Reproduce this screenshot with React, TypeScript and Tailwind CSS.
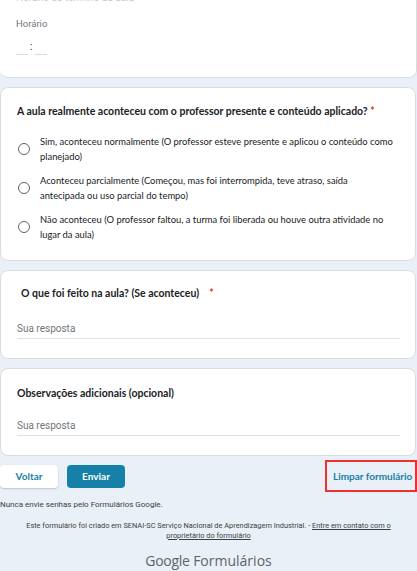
import React from "react";

const lato = { fontFamily: "Lato, 'Noto Sans', sans-serif" };
const roboto = { fontFamily: "Roboto, 'Liberation Sans', sans-serif" };

function Radio({ children }: { children: React.ReactNode }) {
  return (
    <div className="flex items-center gap-[10px]">
      <div className="ml-[17px] h-[12px] w-[12px] shrink-0 rounded-full border-[1.5px] border-[#5f6368]" />
      <div className="text-[9.4px] leading-[15px] text-[#202124]" style={lato}>
        {children}
      </div>
    </div>
  );
}

function TextAnswer() {
  return (
    <div className="mr-[15px] border-b border-[#e0e0e0] pb-[2px] text-[10px] leading-[14px] text-[#70757a]" style={roboto}>
      Sua resposta
    </div>
  );
}

export default function App() {
  return (
    <div className="h-[571px] w-[417px] overflow-hidden bg-[#e9f0f8]">
      <div className="flex flex-col gap-[9px]">
        {/* Card 1 */}
        <div className="-mt-[8px] rounded-b-[8px] border-b border-r border-[#dadce0] bg-white px-[16px] pb-[22px]">
          <div className="text-[10px] leading-[12px] text-[#c6c9cc]" style={roboto}>
            Horário de término da aula
          </div>
          <div className="mt-[14px] text-[9.5px] leading-[12px] text-[#70757a]" style={roboto}>
            Horário
          </div>
          <div className="mt-[12px] flex items-end gap-[2px]">
            <div className="h-[1px] w-[12px] bg-[#dadce0]" />
            <div className="mb-[3px] text-[10px] leading-[10px] text-[#202124]" style={roboto}>
              :
            </div>
            <div className="ml-[1px] h-[1px] w-[12px] bg-[#dadce0]" />
          </div>
        </div>

        {/* Card 2 */}
        <div className="mr-[1px] rounded-[8px] border border-[#dadce0] bg-white pb-[18px] pt-[16px]">
          <div className="pl-[16px] text-[10.5px] font-bold leading-[14px] text-[#202124]" style={lato}>
            A aula realmente aconteceu com o professor presente e conteúdo aplicado?{" "}
            <span className="text-[#d93025]">*</span>
          </div>
          <div className="mt-[16px] flex flex-col gap-[9px] pr-[20px]">
            <Radio>
              Sim, aconteceu normalmente (O professor esteve presente e aplicou o conteúdo como planejado)
            </Radio>
            <Radio>
              Aconteceu parcialmente (Começou, mas foi interrompida, teve atraso, saída
              <br />
              antecipada ou uso parcial do tempo)
            </Radio>
            <Radio>
              Não aconteceu (O professor faltou, a turma foi liberada ou houve outra atividade no lugar da aula)
            </Radio>
          </div>
        </div>

        {/* Card 3 */}
        <div className="mr-[1px] rounded-[8px] border border-[#dadce0] bg-white pb-[19px] pl-[16px] pt-[15px]">
          <div className="pl-[4px] text-[10.5px] font-bold leading-[14px] text-[#202124]" style={lato}>
            O que foi feito na aula? (Se aconteceu)
            <span className="ml-[10px] text-[#d93025]">*</span>
          </div>
          <div className="mt-[22px]">
            <TextAnswer />
          </div>
        </div>

        {/* Card 4 */}
        <div className="mr-[1px] rounded-[8px] border border-[#dadce0] bg-white pb-[19px] pl-[16px] pt-[17px]">
          <div className="text-[10.5px] font-bold leading-[14px] text-[#202124]" style={lato}>
            Observações adicionais (opcional)
          </div>
          <div className="mt-[19px]">
            <TextAnswer />
          </div>
        </div>
      </div>

      {/* Buttons */}
      <div className="mt-[4px] flex items-center justify-between">
        <div className="flex items-center gap-[9px]">
          <div
            className="flex h-[23px] w-[58px] items-center justify-center rounded-[4px] bg-white text-[10px] font-bold text-[#1b7fa6] shadow-[0_1px_2px_rgba(0,0,0,0.2)]"
            style={lato}
          >
            Voltar
          </div>
          <div
            className="flex h-[23px] w-[58px] items-center justify-center rounded-[4px] bg-[#1580a8] text-[10px] font-bold text-white"
            style={lato}
          >
            Enviar
          </div>
        </div>
        <div className="flex h-[32px] w-[92px] items-center border-2 border-[#ef3030] pl-[6px]">
          <span className="text-[10px] font-bold text-[#1b7fa6]" style={lato}>
            Limpar formulário
          </span>
        </div>
      </div>

      <div className="mt-[8px] text-[8px] leading-[10px] text-[#3c4043]" style={roboto}>
        Nunca envie senhas pelo Formulários Google.
      </div>

      <div className="mt-[11px] px-[12px] text-center text-[7.4px] leading-[10px] text-[#3c4043]" style={roboto}>
        Este formulário foi criado em SENAI-SC Serviço Nacional de Aprendizagem Industrial. -{" "}
        <span className="underline">Entre em contato com o proprietário do formulário</span>
      </div>

      <div className="mt-[11px] text-center text-[14px] leading-[18px] text-[#5f6368]" style={{ fontFamily: "'Open Sans', Roboto, sans-serif" }}>
        <span className="font-medium tracking-[-0.3px]">Google</span> <span>Formulários</span>
      </div>
    </div>
  );
}
